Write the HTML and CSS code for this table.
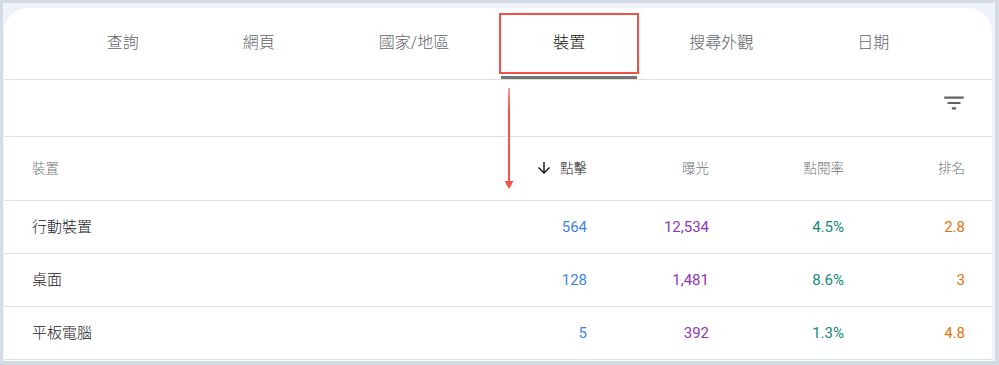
FILE: index.html
```html
<!DOCTYPE html>
<html lang="zh-Hant">
<head>
<meta charset="utf-8">
<title>成效 - 裝置</title>
<link rel="stylesheet" href="styles.css">
</head>
<body>
<div class="frame">
  <div class="card">
    <nav class="tabs">
      <div class="tab">查詢</div>
      <div class="tab">網頁</div>
      <div class="tab">國家/地區</div>
      <div class="tab active">裝置<span class="callout-box"></span></div>
      <div class="tab">搜尋外觀</div>
      <div class="tab">日期</div>
    </nav>
    <div class="toolbar">
      <svg class="filter-icon" viewBox="0 0 24 24" aria-hidden="true"><path d="M10 18h4v-2h-4v2zM3 6v2h18V6H3zm3 7h12v-2H6v2z"/></svg>
    </div>
    <div class="table">
      <div class="row head">
        <div class="cell label">裝置</div>
        <div class="cell num sorted"><svg class="sort-icon" viewBox="0 0 24 24" aria-hidden="true"><path d="M20 12l-1.41-1.41L13 16.17V4h-2v12.17l-5.58-5.59L4 12l8 8 8-8z"/></svg><span class="cjk">點擊</span></div>
        <div class="cell num">曝光</div>
        <div class="cell num">點閱率</div>
        <div class="cell num">排名</div>
      </div>
      <div class="row">
        <div class="cell label">行動裝置</div>
        <div class="cell num clicks">564</div>
        <div class="cell num impr">12,534</div>
        <div class="cell num ctr">4.5%</div>
        <div class="cell num pos">2.8</div>
      </div>
      <div class="row">
        <div class="cell label">桌面</div>
        <div class="cell num clicks">128</div>
        <div class="cell num impr">1,481</div>
        <div class="cell num ctr">8.6%</div>
        <div class="cell num pos">3</div>
      </div>
      <div class="row">
        <div class="cell label">平板電腦</div>
        <div class="cell num clicks">5</div>
        <div class="cell num impr">392</div>
        <div class="cell num ctr">1.3%</div>
        <div class="cell num pos">4.8</div>
      </div>
    </div>
    <svg class="callout-arrow" viewBox="0 0 12 102" aria-hidden="true">
      <defs>
        <linearGradient id="arrowFade" x1="0" y1="0" x2="0" y2="1">
          <stop offset="0" stop-color="#ff9a90"/>
          <stop offset="0.25" stop-color="#f55247"/>
          <stop offset="1" stop-color="#f55247"/>
        </linearGradient>
      </defs>
      <rect x="5" y="0" width="2" height="95" fill="url(#arrowFade)"/>
      <path d="M1.5 93 L10.5 93 L6 101 Z" fill="#f55247"/>
    </svg>
  </div>
</div>
</body>
</html>
```

FILE: styles.css
```css
* { box-sizing: border-box; }

html, body {
  margin: 0;
  padding: 0;
}

body {
  width: 999px;
  height: 365px;
  background: #d3dce5;
  font-family: Roboto, "Noto Sans CJK TC", "Noto Sans", sans-serif;
  overflow: hidden;
}

.frame {
  margin: 3px 4px 0 3px;
  height: 358px;
  background: #eef2fa;
  padding: 5px 3px 0 1px;
}

.card {
  position: relative;
  height: 353px;
  background: #ffffff;
  border-radius: 24px 24px 0 0;
}

/* Tabs */
.tabs {
  display: flex;
  justify-content: center;
  height: 72px;
  border-bottom: 1px solid #e0e0e0;
}

.tab {
  position: relative;
  display: flex;
  align-items: center;
  justify-content: center;
  height: 71px;
  padding: 0 52px 6px;
  font-size: 16px;
  font-weight: 300;
  color: #5f6368;
  white-space: nowrap;
}

.tab.active {
  color: #111111;
}

.tab.active::after {
  content: "";
  position: absolute;
  left: 0;
  right: 0;
  bottom: 0;
  height: 3px;
  background: #757575;
}

.callout-box {
  position: absolute;
  top: 5px;
  bottom: 5px;
  left: -2px;
  right: -2px;
  border: 2px solid #f55247;
}

/* Toolbar */
.toolbar {
  display: flex;
  justify-content: flex-end;
  align-items: flex-start;
  height: 57px;
  padding: 10px 25px 0 0;
  border-bottom: 1px solid #e0e0e0;
}

.filter-icon {
  width: 26px;
  height: 26px;
  fill: #5f6368;
}

/* Table */
.row {
  display: grid;
  grid-template-columns: 1fr 120px 122px 135px 121px;
  align-items: center;
  height: 53px;
  padding: 0 27px 0 28px;
  border-bottom: 1px solid #e0e0e0;
  font-size: 15px;
  color: #202124;
}

.row.head {
  height: 64px;
  padding-bottom: 4px;
  font-size: 13.5px;
  font-weight: 300;
  color: #70757a;
}

.cell.label {
  padding-bottom: 4px;
  font-weight: 300;
}

.row.head .cell.label {
  padding-bottom: 0;
}

.cell.num {
  text-align: right;
}

.cell.sorted {
  display: flex;
  align-items: center;
  justify-content: flex-end;
  color: #202124;
}

.sort-icon {
  width: 18px;
  height: 18px;
  margin-right: 7px;
  margin-top: 3px;
  fill: #202124;
}

.clicks { color: #3f84e5; }
.impr { color: #9034b9; }
.ctr { color: #12897b; }
.pos { color: #e8710a; }

.callout-arrow {
  position: absolute;
  left: 499px;
  top: 80px;
  width: 12px;
  height: 102px;
}
```
